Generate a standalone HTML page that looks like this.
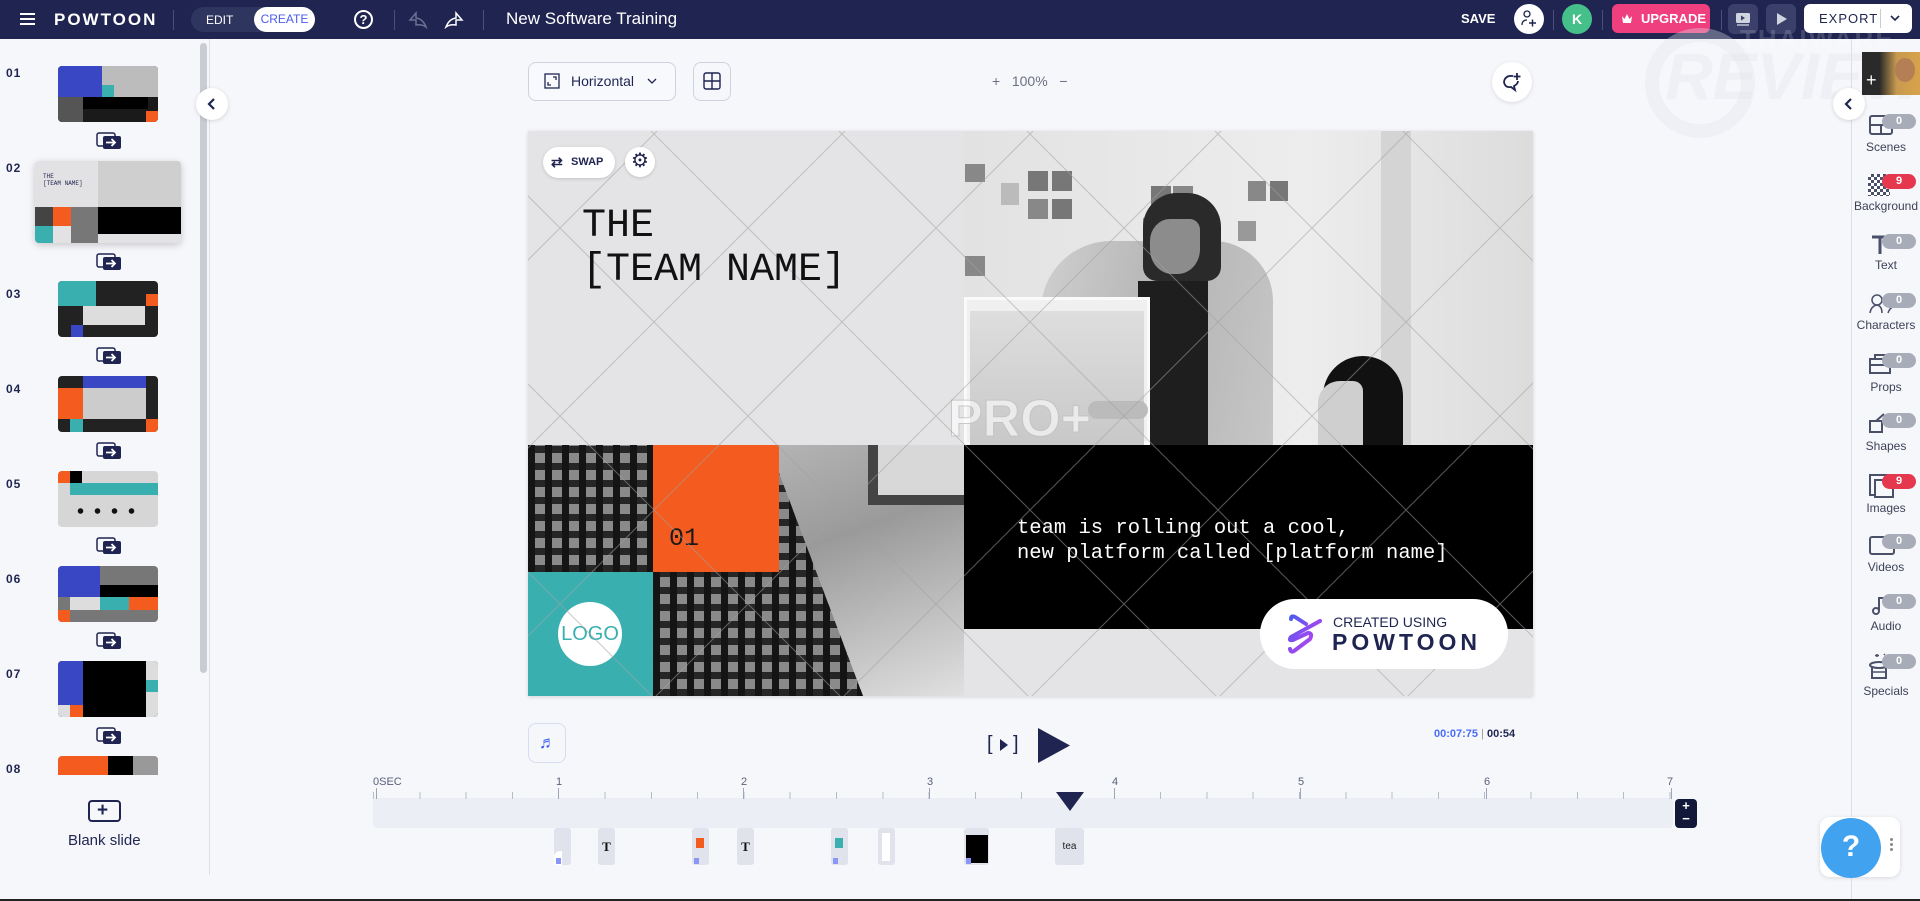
<!DOCTYPE html>
<html><head><meta charset="utf-8"><style>
*{box-sizing:border-box;margin:0;padding:0}
body{width:1920px;height:901px;overflow:hidden;background:#f6f7fb;font-family:"Liberation Sans",sans-serif;position:relative;color:#1f2550}
.a{position:absolute}
.top{left:0;top:0;width:1920px;height:39px;background:#1f2550}
.vd{position:absolute;top:10px;width:1px;height:20px;background:#4a5077}
.num{position:absolute;left:6px;font-size:12px;font-weight:bold;color:#1f2550;letter-spacing:1px}
.th{position:absolute;left:58px;width:100px;height:56px;border-radius:4px;overflow:hidden}
.tr{position:absolute;left:96px;width:25px;height:17px}
.rl{position:absolute;left:1852px;width:68px;text-align:center;font-size:12px;color:#3d4257}
.bd{position:absolute;left:1882px;width:34px;height:15px;border-radius:8px;background:#a8abb8;color:#fff;font-size:11px;font-weight:bold;text-align:center;line-height:15px}
.bd.r{background:#e5384f}
.ri{position:absolute;left:1868px}
.lbl{position:absolute;top:776px;font-size:11px;color:#5b607a}
.tk{position:absolute;width:1px;background:#a0a4b4}
.clip{position:absolute;top:828px;width:17px;height:37px;background:#e0e3ec;border-radius:3px}
.plaid{background:repeating-linear-gradient(0deg,rgba(20,20,20,.85) 0 7px,transparent 7px 17px),repeating-linear-gradient(90deg,#151515 0 7px,#8a8a8a 7px 17px)}
</style></head><body>

<!-- TOP BAR -->
<div class="a top"></div>
<div class="a" style="left:20px;top:13px;width:15px;height:2px;background:#fff;box-shadow:0 5px 0 #fff,0 10px 0 #fff"></div>
<div class="a" style="left:54px;top:10px;font-size:17px;font-weight:bold;color:#fff;letter-spacing:2px">POWTOON</div>
<div class="vd" style="left:173px"></div>
<div class="a" style="left:191px;top:7px;width:124px;height:25px;border-radius:13px;background:#2e355e"></div>
<div class="a" style="left:206px;top:13px;font-size:12px;color:#fff">EDIT</div>
<div class="a" style="left:254px;top:7px;width:61px;height:25px;border-radius:13px;background:#fff;color:#4a5cf0;font-size:12px;text-align:center;line-height:25px">CREATE</div>
<div class="a" style="left:354px;top:10px;width:19px;height:19px;border:2px solid #fff;border-radius:50%;color:#fff;font-size:13px;font-weight:bold;text-align:center;line-height:15px">?</div>
<div class="vd" style="left:394px"></div>
<svg class="a" style="left:408px;top:10px" width="20" height="20" viewBox="0 0 20 20"><path d="M8 3 L2 10 L8 10 L8 15 Q14 14 18 17 Q15 9 8 8 Z" fill="none" stroke="#6b7094" stroke-width="1.5"/></svg>
<svg class="a" style="left:444px;top:10px" width="20" height="20" viewBox="0 0 20 20"><path d="M12 3 L18 10 L12 10 L12 15 Q6 14 2 17 Q5 9 12 8 Z" fill="none" stroke="#fff" stroke-width="1.5"/></svg>
<div class="vd" style="left:483px"></div>
<div class="a" style="left:506px;top:9px;font-size:17px;color:#fff">New Software Training</div>

<div class="a" style="left:1461px;top:11px;font-size:13px;font-weight:bold;color:#fff">SAVE</div>
<div class="a" style="left:1514px;top:4px;width:30px;height:30px;border-radius:50%;background:#fff"></div>
<svg class="a" style="left:1519px;top:9px" width="20" height="20" viewBox="0 0 20 20"><circle cx="8" cy="5" r="3" fill="none" stroke="#1f2550" stroke-width="1.3"/><path d="M3 16 Q3 11 8 11" fill="none" stroke="#1f2550" stroke-width="1.3"/><path d="M10 14h7M13.5 10.5v7" stroke="#1f2550" stroke-width="1.5"/></svg>
<div class="vd" style="left:1553px"></div>
<div class="a" style="left:1562px;top:4px;width:30px;height:30px;border-radius:50%;background:#45c08a;color:#fff;font-weight:bold;font-size:14px;text-align:center;line-height:30px">K</div>
<div class="vd" style="left:1602px"></div>
<div class="a" style="left:1612px;top:4px;width:98px;height:29px;border-radius:6px;background:#ef3f7e;color:#fff;font-size:13px;font-weight:bold;line-height:29px;padding-left:29px">UPGRADE</div>
<svg class="a" style="left:1621px;top:13px" width="12" height="11" viewBox="0 0 12 11"><path d="M1 3 L3.5 6 L6 1 L8.5 6 L11 3 L10 10 H2 Z" fill="#fff"/></svg>
<div class="vd" style="left:1721px"></div>
<div class="a" style="left:1728px;top:4px;width:30px;height:30px;border-radius:6px;background:#3a406a"></div>
<svg class="a" style="left:1734px;top:10px" width="18" height="18" viewBox="0 0 18 18"><rect x="2" y="3" width="14" height="10" rx="1.5" fill="#d0d3e0"/><path d="M7 5.5 L11 8 L7 10.5Z" fill="#3a406a"/><path d="M3 15h12" stroke="#d0d3e0" stroke-width="1.3"/></svg>
<div class="a" style="left:1766px;top:4px;width:30px;height:30px;border-radius:6px;background:#3a406a"></div>
<svg class="a" style="left:1773px;top:11px" width="16" height="16" viewBox="0 0 16 16"><path d="M4 2 L14 8 L4 14Z" fill="#d0d3e0"/></svg>
<div class="a" style="left:1804px;top:4px;width:108px;height:29px;border-radius:6px;background:#fff"></div>
<div class="a" style="left:1819px;top:11px;font-size:13px;color:#1f2550;letter-spacing:1px">EXPORT</div>
<div class="a" style="left:1880px;top:9px;width:1px;height:19px;background:#ccc"></div>
<svg class="a" style="left:1890px;top:14px" width="10" height="8" viewBox="0 0 10 8"><path d="M1 2 L5 6 L9 2" fill="none" stroke="#1f2550" stroke-width="1.6"/></svg>

<!-- watermark -->
<div class="a" style="left:1645px;top:28px;width:110px;height:110px;border-radius:50%;border:14px solid rgba(225,227,235,0.35)"></div>
<div class="a" style="left:1740px;top:24px;font-size:26px;font-weight:bold;color:rgba(255,255,255,0.16);letter-spacing:2px">THAIWARE</div>
<div class="a" style="left:1665px;top:38px;font-size:66px;font-weight:bold;font-style:italic;color:rgba(225,227,235,0.35)">REVIEW</div>

<!-- LEFT PANEL -->
<div class="a" style="left:209px;top:39px;width:1px;height:836px;background:#dcdfe7"></div>
<div class="a" style="left:200px;top:43px;width:7px;height:630px;border-radius:4px;background:#c9ccd3"></div>
<div class="a" style="left:196px;top:88px;width:32px;height:32px;border-radius:50%;background:#fff;box-shadow:0 1px 4px rgba(0,0,0,.15)"></div>
<svg class="a" style="left:205px;top:97px" width="14" height="14" viewBox="0 0 14 14"><path d="M9 2 L4 7 L9 12" fill="none" stroke="#1f2550" stroke-width="2.2"/></svg>

<div class="num" style="top:66px">01</div>
<div class="th" style="top:66px;background:#1a1a1a"><div class="a" style="left:0;top:0;width:44px;height:31px;background:#3a47c4"></div><div class="a" style="left:44px;top:0;width:56px;height:31px;background:#bcbcbc"></div><div class="a" style="left:44px;top:19px;width:12px;height:12px;background:#3aafb0"></div><div class="a" style="left:25px;top:31px;width:65px;height:12px;background:#000"></div><div class="a" style="left:0;top:31px;width:25px;height:25px;background:#555"></div><div class="a" style="left:88px;top:45px;width:12px;height:11px;background:#f45b1f"></div></div>
<div class="num" style="top:161px">02</div>
<div class="th" style="left:35px;top:161px;width:146px;height:82px;box-shadow:0 2px 8px rgba(0,0,0,.2);background:#e2e2e4"><div class="a" style="left:63px;top:0;width:83px;height:46px;background:#cfcfcf"></div><div class="a" style="left:0;top:46px;width:18px;height:19px;background:#444"></div><div class="a" style="left:18px;top:46px;width:18px;height:19px;background:#f45b1f"></div><div class="a" style="left:0;top:65px;width:18px;height:17px;background:#3aafb0"></div><div class="a" style="left:36px;top:46px;width:27px;height:36px;background:#777"></div><div class="a" style="left:63px;top:46px;width:83px;height:27px;background:#000"></div><div class="a" style="left:8px;top:12px;font-size:6px;font-family:'Liberation Mono',monospace">THE<br>[TEAM NAME]</div></div>
<div class="num" style="top:287px">03</div>
<div class="th" style="top:281px;background:#222"><div class="a" style="left:0;top:0;width:38px;height:25px;background:#3aafb0"></div><div class="a" style="left:25px;top:25px;width:62px;height:19px;background:#ddd"></div><div class="a" style="left:88px;top:13px;width:12px;height:12px;background:#f45b1f"></div><div class="a" style="left:13px;top:44px;width:12px;height:12px;background:#3a47c4"></div></div>
<div class="num" style="top:382px">04</div>
<div class="th" style="top:376px;background:#222"><div class="a" style="left:25px;top:0;width:63px;height:12px;background:#3a47c4"></div><div class="a" style="left:0;top:12px;width:25px;height:31px;background:#f45b1f"></div><div class="a" style="left:25px;top:12px;width:63px;height:31px;background:#ccc"></div><div class="a" style="left:12px;top:43px;width:13px;height:13px;background:#3aafb0"></div><div class="a" style="left:88px;top:43px;width:12px;height:13px;background:#f45b1f"></div></div>
<div class="num" style="top:477px">05</div>
<div class="th" style="top:471px;background:#d6d6d6"><div class="a" style="left:0;top:0;width:12px;height:12px;background:#f45b1f"></div><div class="a" style="left:12px;top:0;width:12px;height:12px;background:#000"></div><div class="a" style="left:12px;top:12px;width:88px;height:12px;background:#3aafb0"></div><div class="a" style="left:14px;top:37px;width:72px;height:6px;background:radial-gradient(circle,#111 2.5px,transparent 3px) 0 0/17px 6px"></div></div>
<div class="num" style="top:572px">06</div>
<div class="th" style="top:566px;background:#777"><div class="a" style="left:0;top:0;width:42px;height:31px;background:#3a47c4"></div><div class="a" style="left:42px;top:19px;width:58px;height:12px;background:#000"></div><div class="a" style="left:12px;top:31px;width:30px;height:13px;background:#ddd"></div><div class="a" style="left:42px;top:31px;width:29px;height:13px;background:#3aafb0"></div><div class="a" style="left:71px;top:31px;width:29px;height:13px;background:#f45b1f"></div><div class="a" style="left:0;top:44px;width:12px;height:12px;background:#f45b1f"></div></div>
<div class="num" style="top:667px">07</div>
<div class="th" style="top:661px;background:#000"><div class="a" style="left:0;top:0;width:25px;height:44px;background:#3a47c4"></div><div class="a" style="left:88px;top:0;width:12px;height:56px;background:#ddd"></div><div class="a" style="left:88px;top:19px;width:12px;height:12px;background:#3aafb0"></div><div class="a" style="left:12px;top:44px;width:13px;height:12px;background:#f45b1f"></div><div class="a" style="left:0;top:44px;width:12px;height:12px;background:#ddd"></div></div>
<div class="num" style="top:762px">08</div>
<div class="th" style="top:756px;height:19px;border-radius:4px 4px 0 0;background:#f45b1f"><div class="a" style="left:50px;top:0;width:25px;height:19px;background:#000"></div><div class="a" style="left:75px;top:0;width:25px;height:19px;background:#999"></div></div>

<svg width="0" height="0" style="position:absolute"><defs><g id="trn"><rect x="1" y="1" width="18" height="13" rx="2" fill="#f6f7fb" stroke="#1f2550" stroke-width="1.5"/><rect x="7" y="4" width="18" height="13" rx="2" fill="#1f2550"/><path d="M10 10.5h9M15.5 7l3.5 3.5-3.5 3.5" stroke="#fff" stroke-width="1.8" fill="none"/></g></defs></svg>
<svg class="tr" style="top:132px"><use href="#trn"/></svg>
<svg class="tr" style="top:253px"><use href="#trn"/></svg>
<svg class="tr" style="top:347px"><use href="#trn"/></svg>
<svg class="tr" style="top:442px"><use href="#trn"/></svg>
<svg class="tr" style="top:537px"><use href="#trn"/></svg>
<svg class="tr" style="top:632px"><use href="#trn"/></svg>
<svg class="tr" style="top:727px"><use href="#trn"/></svg>
<div class="a" style="left:88px;top:800px;width:33px;height:22px;border:2px solid #1f2550;border-radius:4px"></div>
<div class="a" style="left:97px;top:803px;font-size:19px;font-weight:bold;color:#1f2550;line-height:16px">+</div>
<div class="a" style="left:68px;top:832px;font-size:15px;color:#1f2550">Blank slide</div>

<!-- CANVAS TOOLBAR -->
<div class="a" style="left:528px;top:62px;width:148px;height:39px;border:1px solid #cfd2dc;border-radius:8px;background:#f8f9fc"></div>
<svg class="a" style="left:544px;top:73px" width="16" height="16" viewBox="0 0 16 16"><rect x="1" y="1" width="14" height="14" fill="none" stroke="#1f2550" stroke-width="1.3"/><path d="M4 9v3h3M12 7V4H9" fill="none" stroke="#1f2550" stroke-width="1.3"/></svg>
<div class="a" style="left:571px;top:73px;font-size:14px;color:#1f2550">Horizontal</div>
<svg class="a" style="left:647px;top:78px" width="10" height="7" viewBox="0 0 10 7"><path d="M1 1l4 4 4-4" fill="none" stroke="#1f2550" stroke-width="1.3"/></svg>
<div class="a" style="left:693px;top:62px;width:38px;height:39px;border:1px solid #cfd2dc;border-radius:8px"></div>
<svg class="a" style="left:703px;top:72px" width="18" height="18" viewBox="0 0 18 18"><rect x="1" y="1" width="16" height="16" rx="2" fill="none" stroke="#1f2550" stroke-width="1.4"/><path d="M9 1v16M1 9h16" stroke="#1f2550" stroke-width="1.4"/></svg>
<div class="a" style="left:992px;top:73px;font-size:14px;color:#6b7080">+&nbsp;&nbsp; 100%&nbsp;&nbsp; −</div>
<div class="a" style="left:1492px;top:62px;width:40px;height:40px;border-radius:50%;background:#fff;box-shadow:0 1px 4px rgba(0,0,0,.12)"></div>
<svg class="a" style="left:1501px;top:71px" width="22" height="22" viewBox="0 0 22 22"><path d="M12 5 Q4 4 3 11 Q4 17 10 16 L14 19 L13 15 Q17 13 17 10" fill="none" stroke="#1f2550" stroke-width="1.8"/><path d="M16 2v7M12.5 5.5h7" stroke="#1f2550" stroke-width="1.8"/></svg>

<!-- CANVAS -->
<div class="a" style="left:528px;top:131px;width:1005px;height:565px;overflow:hidden;background:#e4e4e6;box-shadow:0 1px 4px rgba(0,0,0,.15)">
 <!-- top right photo -->
 <div class="a" style="left:436px;top:0;width:569px;height:314px;background:linear-gradient(90deg,#e2e2e2,#ededed 60%,#dcdcdc)"></div>
 <div class="a" style="left:437px;top:33px;width:20px;height:18px;background:#888"></div>
 <div class="a" style="left:473px;top:52px;width:18px;height:22px;background:#bbb"></div>
 <div class="a" style="left:500px;top:40px;width:20px;height:20px;background:#777;box-shadow:24px 0 0 #777,0 28px 0 #888,24px 28px 0 #777"></div>
 <div class="a" style="left:623px;top:55px;width:20px;height:20px;background:#777;box-shadow:22px 0 0 #888,-8px 32px 0 #888,14px 70px 0 #aaa"></div>
 <div class="a" style="left:720px;top:50px;width:18px;height:20px;background:#888;box-shadow:22px 0 0 #777,-10px 40px 0 #999"></div>
 <div class="a" style="left:437px;top:125px;width:20px;height:20px;background:#888"></div>
 <div class="a" style="left:853px;top:0;width:30px;height:314px;background:#d4d4d4"></div>
 <div class="a" style="left:513px;top:110px;width:232px;height:204px;background:linear-gradient(100deg,#cfcfcf,#b4b4b4 50%,#c6c6c6);border-radius:70px 60px 0 0"></div>
 <div class="a" style="left:610px;top:150px;width:70px;height:164px;background:#1e1e1e"></div>
 <div class="a" style="left:615px;top:62px;width:78px;height:88px;background:#2a2a2a;border-radius:34px 34px 14px 14px"></div>
 <div class="a" style="left:622px;top:88px;width:50px;height:55px;background:#8c8c8c;border-radius:40% 20% 45% 45%"></div>
 <div class="a" style="left:436px;top:166px;width:186px;height:148px;background:#f0f0f0;border:3px solid #fafafa"></div>
 <div class="a" style="left:442px;top:180px;width:174px;height:134px;background:linear-gradient(#dedede,#c8c8c8)"></div>
 <div class="a" style="left:560px;top:270px;width:60px;height:18px;background:#bbb;border-radius:9px"></div>
 <div class="a" style="left:795px;top:225px;width:80px;height:89px;background:#111;border-radius:40px 40px 0 0"></div>
 <div class="a" style="left:790px;top:250px;width:45px;height:64px;background:#cfcfcf;border-radius:22px 10px 0 0"></div>
 <div class="a" style="left:420px;top:258px;font-size:52px;font-weight:bold;color:rgba(255,255,255,.6);-webkit-text-stroke:1px rgba(190,190,190,.8)">PRO+</div>
 <!-- bottom -->
 <div class="a" style="left:0;top:314px;width:436px;height:251px;background:linear-gradient(160deg,#c8c8c8,#9a9a9a 50%,#e0e0e0)"></div>
 <div class="a" style="left:340px;top:314px;width:96px;height:60px;background:#444"></div>
 <div class="a" style="left:350px;top:314px;width:86px;height:50px;background:#d8d8d8"></div>
 <div class="a" style="left:0;top:314px;width:125px;height:127px" class="plaid"></div>
 <div class="a plaid" style="left:0;top:314px;width:125px;height:127px"></div>
 <div class="a plaid" style="left:125px;top:314px;width:210px;height:251px;clip-path:polygon(0 0,55% 0,100% 100%,0 100%)"></div>
 <div class="a" style="left:125px;top:314px;width:126px;height:127px;background:#f45b1f"></div>
 <div class="a" style="left:141px;top:393px;font-family:'Liberation Mono',monospace;font-size:25px;color:#1a1a1a">01</div>
 <div class="a" style="left:0;top:441px;width:125px;height:124px;background:#3aafb0"></div>
 <div class="a" style="left:30px;top:471px;width:64px;height:64px;border-radius:50%;background:#fff;color:#3aafb0;font-size:20px;text-align:center;line-height:64px">LOGO</div>
 <div class="a" style="left:436px;top:314px;width:569px;height:184px;background:#000"></div>
 <div class="a" style="left:489px;top:385px;font-family:'Liberation Mono',monospace;font-size:20.5px;line-height:25px;color:#fff;white-space:pre">team is rolling out a cool,
new platform called [platform name]</div>
 <svg class="a" style="left:0;top:0" width="1005" height="565"><defs><pattern id="dp" width="188" height="188" patternUnits="userSpaceOnUse" patternTransform="translate(126 3)"><path d="M0 0L188 188M188 0L0 188" stroke="rgba(160,160,160,.55)" stroke-width="1" fill="none"/></pattern></defs><rect width="1005" height="565" fill="url(#dp)"/></svg>
 <!-- badge -->
 <div class="a" style="left:732px;top:468px;width:248px;height:70px;border-radius:35px;background:#fff"></div>
 <svg class="a" style="left:758px;top:482px" width="38" height="42" viewBox="0 0 38 42"><defs><linearGradient id="pg" x1="0" y1="0" x2="1" y2="1"><stop offset="0" stop-color="#4a5cf0"/><stop offset="1" stop-color="#d43bf0"/></linearGradient></defs><path d="M5 6 Q5 2 9 4 L20 11 M34 8 L5 24 Q2 28 7 27 L22 20 Q27 20 24 26 L8 38 Q5 40 4 36" fill="none" stroke="url(#pg)" stroke-width="4" stroke-linecap="round"/></svg>
 <div class="a" style="left:805px;top:483px;font-size:14px;color:#1f2550">CREATED USING</div>
 <div class="a" style="left:804px;top:498px;font-size:23px;font-weight:bold;color:#1f2550;letter-spacing:4px">POWTOON</div>
 <!-- text -->
 <div class="a" style="left:54px;top:74px;font-family:'Liberation Mono',monospace;font-size:40px;line-height:44px;color:#111;white-space:pre">THE
[TEAM NAME]</div>
 <div class="a" style="left:15px;top:16px;width:72px;height:31px;border-radius:16px;background:#fff;box-shadow:0 1px 3px rgba(0,0,0,.15);font-size:11px;font-weight:bold;line-height:31px;padding-left:28px;color:#1f2550">SWAP</div>
 <div class="a" style="left:23px;top:23px;font-size:14px;font-weight:bold;color:#1f2550">⇄</div>
 <div class="a" style="left:97px;top:16px;width:30px;height:30px;border-radius:50%;background:#fff;box-shadow:0 1px 3px rgba(0,0,0,.15);font-size:20px;text-align:center;line-height:29px;color:#1f2550">⚙</div>
</div>

<!-- PLAYER -->
<div class="a" style="left:528px;top:723px;width:38px;height:40px;border:1px solid #d8dcf0;border-radius:8px"></div>
<div class="a" style="left:539px;top:733px;font-size:17px;color:#3b5cf0">♬</div>
<div class="a" style="left:987px;top:733px;font-size:20px;color:#1f2550">[</div>
<svg class="a" style="left:999px;top:739px" width="10" height="12"><path d="M1 0L9 6 1 12Z" fill="#1f2550"/></svg>
<div class="a" style="left:1013px;top:733px;font-size:20px;color:#1f2550">]</div>
<svg class="a" style="left:1038px;top:728px" width="32" height="35"><path d="M0 0L32 17.5 0 35Z" fill="#1f2550"/></svg>
<div class="a" style="left:1434px;top:728px;font-size:11px;color:#4a6cf7;font-weight:bold">00:07:75 <span style="color:#999;font-weight:normal">|</span> <span style="color:#1f2550">00:54</span></div>

<!-- TIMELINE -->
<div class="lbl" style="left:373px">0SEC</div>
<div class="lbl" style="left:556px">1</div><div class="lbl" style="left:741px">2</div><div class="lbl" style="left:927px">3</div><div class="lbl" style="left:1112px">4</div><div class="lbl" style="left:1298px">5</div><div class="lbl" style="left:1484px">6</div><div class="lbl" style="left:1667px">7</div>
<div class="a" style="left:373px;top:798px;width:1300px;height:30px;border-radius:4px;background:#eceef5"></div>
<div class="a" style="left:373px;top:792px;width:1300px;height:7px;background:repeating-linear-gradient(90deg,#b8bcc8 0 1px,transparent 1px 46.3px)"></div>
<div class="tk" style="left:376px;top:788px;height:11px"></div><div class="tk" style="left:558px;top:788px;height:11px"></div><div class="tk" style="left:743px;top:788px;height:11px"></div><div class="tk" style="left:929px;top:788px;height:11px"></div><div class="tk" style="left:1114px;top:788px;height:11px"></div><div class="tk" style="left:1300px;top:788px;height:11px"></div><div class="tk" style="left:1486px;top:788px;height:11px"></div><div class="tk" style="left:1671px;top:788px;height:11px"></div>
<svg class="a" style="left:1056px;top:792px" width="28" height="19"><path d="M0 0H28L14 19Z" fill="#1f2550"/></svg>
<div class="a" style="left:1675px;top:799px;width:22px;height:29px;border-radius:4px;background:#12183a;color:#fff;font-size:13px;font-weight:bold;text-align:center;line-height:13px">+<br>−</div>
<div class="clip" style="left:554px"><div class="a" style="left:0;bottom:0;width:8px;height:14px;background:#fff;border-radius:6px 0 0 0"></div><div class="a" style="left:2px;bottom:1px;width:5px;height:6px;background:#8a96f5"></div></div>
<div class="clip" style="left:598px;font-family:'Liberation Serif',serif;font-weight:bold;font-size:13px;text-align:center;line-height:37px;color:#111">T</div>
<div class="clip" style="left:692px"><div class="a" style="left:4px;top:10px;width:8px;height:10px;background:#f45b1f"></div><div class="a" style="left:2px;bottom:1px;width:5px;height:6px;background:#8a96f5"></div></div>
<div class="clip" style="left:737px;font-family:'Liberation Serif',serif;font-weight:bold;font-size:13px;text-align:center;line-height:37px;color:#111">T</div>
<div class="clip" style="left:831px"><div class="a" style="left:4px;top:10px;width:8px;height:10px;background:#3aafb0"></div><div class="a" style="left:2px;bottom:1px;width:5px;height:6px;background:#8a96f5"></div></div>
<div class="clip" style="left:878px"><div class="a" style="left:4px;top:5px;width:8px;height:28px;background:#fff"></div></div>
<div class="clip" style="left:964px;width:25px"><div class="a" style="left:2px;top:7px;width:22px;height:28px;background:#000"></div><div class="a" style="left:2px;bottom:1px;width:5px;height:6px;background:#8a96f5"></div></div>
<div class="clip" style="left:1055px;width:29px;font-size:10px;text-align:center;line-height:37px;color:#222">tea</div>

<!-- RIGHT PANEL -->
<div class="a" style="left:1851px;top:39px;width:1px;height:862px;background:#dcdfe7"></div>
<div class="a" style="left:1862px;top:52px;width:58px;height:43px;background:linear-gradient(90deg,#2a2a2a 30%,#c89a50 60%,#d8a24a)"></div>
<div class="a" style="left:1895px;top:58px;width:20px;height:24px;border-radius:50%;background:#b57f55"></div>
<div class="a" style="left:1866px;top:70px;color:#fff;font-size:18px">+</div>
<div class="a" style="left:1833px;top:88px;width:32px;height:32px;border-radius:50%;background:#fff;box-shadow:0 1px 4px rgba(0,0,0,.15)"></div>
<svg class="a" style="left:1842px;top:97px" width="14" height="14" viewBox="0 0 14 14"><path d="M9 2 L4 7 L9 12" fill="none" stroke="#1f2550" stroke-width="2.2"/></svg>

<svg class="ri" style="top:114px" width="26" height="22"><rect x="2" y="2" width="22" height="18" rx="2" fill="none" stroke="#4a5068" stroke-width="2"/><path d="M2 11h22M13 11v9" stroke="#4a5068" stroke-width="2"/></svg>
<div class="bd" style="top:114px">0</div><div class="rl" style="top:140px">Scenes</div>
<div class="ri" style="top:174px;width:22px;height:22px;background:conic-gradient(#4a5068 25%,#fff 0 50%,#4a5068 0 75%,#fff 0) 0 0/6px 6px"></div>
<div class="bd r" style="top:174px">9</div><div class="rl" style="top:199px">Background</div>
<svg class="ri" style="top:234px" width="26" height="22"><path d="M4 3h12v4M12 3v17" stroke="#4a5068" stroke-width="3" fill="none"/></svg>
<div class="bd" style="top:234px">0</div><div class="rl" style="top:258px">Text</div>
<svg class="ri" style="top:293px" width="30" height="22"><circle cx="9" cy="7" r="5" fill="none" stroke="#4a5068" stroke-width="1.5"/><path d="M2 20Q3 13 9 12Q14 13 14 20M20 20Q22 14 26 14" fill="none" stroke="#4a5068" stroke-width="1.5"/></svg>
<div class="bd" style="top:293px">0</div><div class="rl" style="top:318px">Characters</div>
<svg class="ri" style="top:353px" width="30" height="22"><rect x="2" y="6" width="20" height="14" fill="none" stroke="#4a5068" stroke-width="2"/><path d="M7 6V2h10v4M2 12h20" stroke="#4a5068" stroke-width="2" fill="none"/></svg>
<div class="bd" style="top:353px">0</div><div class="rl" style="top:380px">Props</div>
<svg class="ri" style="top:412px" width="30" height="22"><rect x="2" y="9" width="12" height="11" fill="none" stroke="#4a5068" stroke-width="2"/><path d="M8 9L16 2" stroke="#4a5068" stroke-width="2"/></svg>
<div class="bd" style="top:413px">0</div><div class="rl" style="top:439px">Shapes</div>
<svg class="ri" style="top:473px" width="30" height="26"><rect x="2" y="2" width="18" height="20" fill="none" stroke="#4a5068" stroke-width="2"/><rect x="7" y="7" width="18" height="17" fill="#f6f7fb" stroke="#4a5068" stroke-width="2"/></svg>
<div class="bd r" style="top:474px">9</div><div class="rl" style="top:501px">Images</div>
<svg class="ri" style="top:534px" width="30" height="22"><rect x="2" y="3" width="24" height="17" rx="2" fill="none" stroke="#4a5068" stroke-width="2"/></svg>
<div class="bd" style="top:534px">0</div><div class="rl" style="top:560px">Videos</div>
<svg class="ri" style="top:594px" width="30" height="22"><circle cx="8" cy="17" r="3" fill="none" stroke="#4a5068" stroke-width="2"/><path d="M11 17V4h8" stroke="#4a5068" stroke-width="2" fill="none"/></svg>
<div class="bd" style="top:594px">0</div><div class="rl" style="top:619px">Audio</div>
<svg class="ri" style="top:652px" width="30" height="30"><path d="M9 2v3M7 3.5h4M16 2l1 1" stroke="#4a5068" stroke-width="1.5"/><ellipse cx="11" cy="13" rx="9" ry="3" fill="none" stroke="#4a5068" stroke-width="2"/><path d="M4 14v12h14V14" fill="none" stroke="#4a5068" stroke-width="2"/><path d="M4 20h14" stroke="#4a5068" stroke-width="1.5"/></svg>
<div class="bd" style="top:654px">0</div><div class="rl" style="top:684px">Specials</div>

<!-- help -->
<div class="a" style="left:1820px;top:817px;width:80px;height:60px;border-radius:10px;background:#fff;box-shadow:0 1px 5px rgba(0,0,0,.12)"></div>
<div class="a" style="left:1821px;top:818px;width:60px;height:60px;border-radius:50%;background:#41a3f0;color:#fff;font-size:30px;font-weight:bold;text-align:center;line-height:58px">?</div>
<div class="a" style="left:1890px;top:838px;width:3px;height:3px;background:#888;border-radius:50%;box-shadow:0 5px 0 #888,0 10px 0 #888"></div>
<div class="a" style="left:0;top:899px;width:1920px;height:2px;background:#222"></div>
</body></html>
